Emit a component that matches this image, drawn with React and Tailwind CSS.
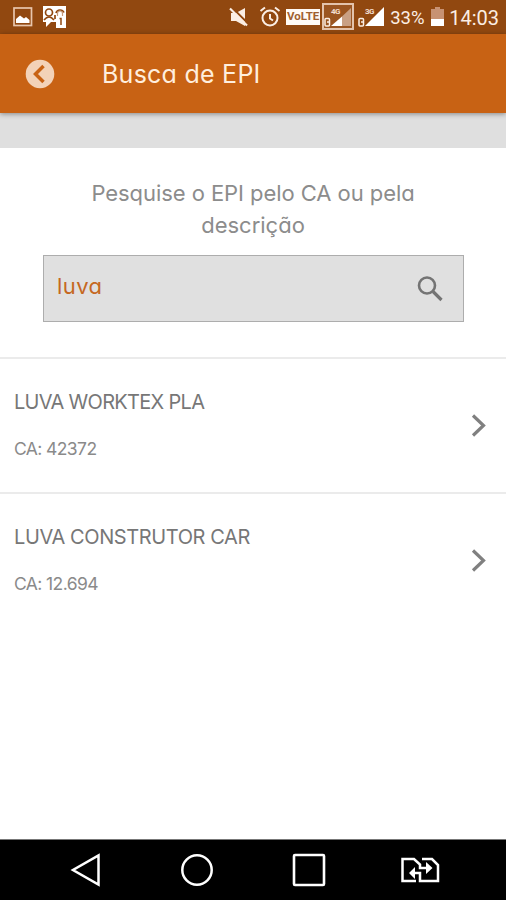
// Equipment (EPI) search screen: search box on top, results below.

import React, { useState } from "react";

const RESULTS = [
  { id: 1, name: "LUVA WORKTEX PLA", ca: "42372", nameClass: "tracking-[-0.7px]", caClass: "tracking-[-0.6px]" },
  { id: 2, name: "LUVA CONSTRUTOR CAR", ca: "12.694", nameClass: "tracking-[-0.4px]", caClass: "tracking-[-0.6px]" },
];

function SignalIcon({ label, framed }) {
  return (
    <svg className="h-[28px] w-[32px] shrink-0" viewBox="0 0 32 28">
      {framed && <rect x="1" y="1" width="30" height="25" fill="#a8683c" fillOpacity=".4" stroke="#e3c3ac" strokeWidth="2" />}
      {framed ? (
        <>
          <path d="M9 23L20 13.500V23Z" fill="#fff" />
          <path d="M20 13.500L29 5V23H20Z" fill="#c9a084" />
        </>
      ) : (
        <path d="M9 23L28 4V23Z" fill="#fff" />
      )}
      <text x="9" y="10.500" fontSize="8" fontWeight="700" fill="#f3dfd0" fontFamily="Roboto, sans-serif" letterSpacing="-0.7">{label}</text>
      <rect x="3" y="15.500" width="4.500" height="7.500" rx="1" fill="none" stroke="#fbeee4" strokeWidth="1.500" />
      <path d="M5 19H7" stroke="#fbeee4" strokeWidth="1.500" />
    </svg>
  );
}

function StatusBar() {
  return (
    <div className="flex h-[34px] shrink-0 items-center bg-[#914810] text-[#fbeee4]">
      {/* notifications */}
      <svg className="ml-[13px] h-[20px] w-[20px]" viewBox="0 0 20 20">
        <rect x="1" y="1" width="17.500" height="17.500" fill="none" stroke="#e8c6ad" strokeWidth="1.700" />
        <path d="M3 16V12L7 8.500L11 11.500L13 10L16.500 13V16Z" fill="#fff" />
      </svg>
      <svg className="ml-[9px] h-[24px] w-[25px]" viewBox="0 0 25 24">
        <path d="M1 1H24V23H14V17H9L4 22V17H1Z" fill="#fff" />
        <circle cx="7" cy="7.500" r="3.500" fill="#fff" stroke="#914810" strokeWidth="1.700" />
        <path d="M2 15Q7 9 12 15" fill="none" stroke="#914810" strokeWidth="1.700" />
        <path d="M13 14V10M14 8A4.300 4.300 0 0 1 22 7.500" fill="none" stroke="#914810" strokeWidth="1.700" />
        <path d="M15.500 11V8.500A2.500 2.500 0 0 1 20.500 8.500V11" fill="none" stroke="#c79b7b" strokeWidth="1.200" />
        <path d="M17.500 13.500H19V20" fill="none" stroke="#914810" strokeWidth="1.500" />
      </svg>

      {/* system icons */}
      <svg className="ml-auto h-[20px] w-[20px] shrink-0" viewBox="0 0 20 20">
        <path d="M2 6H7L16 1V19L7 14H2Z" fill="#fbeee4" />
        <path d="M3 0.500L20 17.500" stroke="#914810" strokeWidth="2" />
        <path d="M1 1.500L18 18.500" stroke="#fbeee4" strokeWidth="2.200" />
      </svg>
      <svg className="ml-[10px] h-[22px] w-[22px] shrink-0" viewBox="0 0 22 22" fill="none" stroke="#fbeee4" strokeWidth="2">
        <circle cx="11" cy="12" r="7.500" />
        <path d="M1.500 5L6 1.500M16 1.500L20.500 5M11 8V12.500L14 14.500" />
      </svg>
      <div className="ml-[5px] flex h-[16px] w-[34px] shrink-0 items-center justify-center bg-[#fffaf5] font-[Roboto,sans-serif] text-[11.5px] font-bold leading-none text-[#a0602f]">
        VoLTE
      </div>
      <div className="ml-[2px] flex"><SignalIcon label="4G" framed /></div>
      <div className="ml-[2px] flex"><SignalIcon label="3G" /></div>
      <span className="ml-[2px] w-[37px] whitespace-nowrap pt-[2px] font-[Roboto,sans-serif] text-[18.5px] leading-none">33%</span>
      <svg className="ml-[4px] h-[20px] w-[13px] shrink-0" viewBox="0 0 13 20">
        <path d="M0 2H4V0H9V2H13V12H0Z" fill="#c79273" />
        <path d="M0 12H13V19H0Z" fill="#fff" />
      </svg>
      <span className="ml-[5px] mr-[7px] whitespace-nowrap pt-[2px] font-[Roboto,sans-serif] text-[20px] leading-none">14:03</span>
    </div>
  );
}

function Header() {
  return (
    <header className="flex h-[79px] shrink-0 items-center bg-[#c86214] shadow-[0_1px_5px_rgba(0,0,0,0.4)]">
      <button className="ml-[25px]" aria-label="Voltar">
        <svg className="h-[30px] w-[30px]" viewBox="0 0 30 30">
          <circle cx="15" cy="15" r="14.300" fill="#f3d2b8" />
          <path d="M18.500 7L10.500 15L18.500 23" fill="none" stroke="#c86214" strokeWidth="3.500" />
        </svg>
      </button>
      <h1 className="ml-[47px] pt-[2px] text-[25px] leading-none tracking-[0.25px] text-[#ffeedd]">Busca de EPI</h1>
    </header>
  );
}

function ResultRow({ item }) {
  return (
    <li className="flex h-[135px] items-center justify-between border-t-2 border-[#ebebeb] pl-[14px] pr-[18px] text-[#777]">
      <div className="flex flex-col gap-[27px]">
        <p className={`text-[20px] leading-[20px] whitespace-nowrap ${item.nameClass}`}>{item.name}</p>
        <p className={`text-[17.5px] leading-[20px] whitespace-nowrap text-[#8a8a8a] ${item.caClass}`}>CA: {item.ca}</p>
      </div>
      <svg className="h-[26px] w-[18px]" viewBox="0 0 18 26">
        <path d="M3 2.500L13.500 12.500L3 22.500" fill="none" stroke="#808080" strokeWidth="3.200" />
      </svg>
    </li>
  );
}

function NavBar() {
  return (
    <nav className="flex h-[61px] shrink-0 items-center border-t border-[#777] bg-black pl-[70px]">
      <svg className="h-[36px] w-[32px]" viewBox="0 0 32 36">
        <path d="M28.500 3.500V32.500L3 18Z" fill="none" stroke="#fff" strokeWidth="2.500" />
      </svg>
      <svg className="ml-[77px] h-[36px] w-[36px]" viewBox="0 0 36 36">
        <circle cx="18" cy="18" r="14.700" fill="none" stroke="#fff" strokeWidth="2.500" />
      </svg>
      <svg className="ml-[76px] h-[36px] w-[36px]" viewBox="0 0 36 36">
        <rect x="3" y="3" width="30" height="30" rx="1" fill="none" stroke="#fff" strokeWidth="2.600" />
      </svg>
      <svg className="ml-[73px] h-[28px] w-[40px]" viewBox="0 0 40 28" fill="none" stroke="#fff" strokeWidth="2.500">
        <path d="M16 25H2.500V3H14L20 8.500V12H28" />
        <path d="M22 3H32L38 9V25H20V17H13" />
        <path d="M26 6L32.500 12L26 18ZM15 11L9 17L15 23Z" fill="#fff" stroke="none" />
      </svg>
    </nav>
  );
}

export default function App() {
  const [query, setQuery] = useState("luva");

  return (
    <div className="flex h-[900px] w-[506px] flex-col overflow-hidden bg-white font-[Inter,'Open_Sans',sans-serif] [font-feature-settings:'cv11'_1]">
      <StatusBar />
      <div className="flex h-[114px] shrink-0 flex-col bg-[#dfdfdf]">
        <Header />
      </div>

      <section className="flex h-[209px] shrink-0 flex-col items-center pt-[29px]">
        <p className="text-center text-[22px] leading-[32px] text-[#8c8c8c]">
          <span className="whitespace-nowrap tracking-[-0.06px]">Pesquise o EPI pelo CA ou pela</span>
          <br />
          <span>descrição</span>
        </p>
        <div className="ml-px mt-[14px] flex h-[67px] w-[421px] items-center border border-[#adadad] bg-[#e0e0e0] pl-[13px] pr-[19px]">
          <input
            className="min-w-0 flex-1 bg-transparent pb-[4px] text-[22px] tracking-[0.4px] text-[#c5681f] outline-none"
            value={query}
            onChange={(e) => setQuery(e.target.value)}
          />
          <svg className="h-[28px] w-[28px]" viewBox="0 0 28 28" fill="none" stroke="#747474">
            <circle cx="11" cy="10.500" r="8" strokeWidth="2.600" />
            <path d="M17 16.500L25.500 25" strokeWidth="3.200" />
          </svg>
        </div>
      </section>

      <ul className="flex flex-1 flex-col">
        {RESULTS.map((item) => (
          <ResultRow key={item.id} item={item} />
        ))}
      </ul>

      <NavBar />
    </div>
  );
}
